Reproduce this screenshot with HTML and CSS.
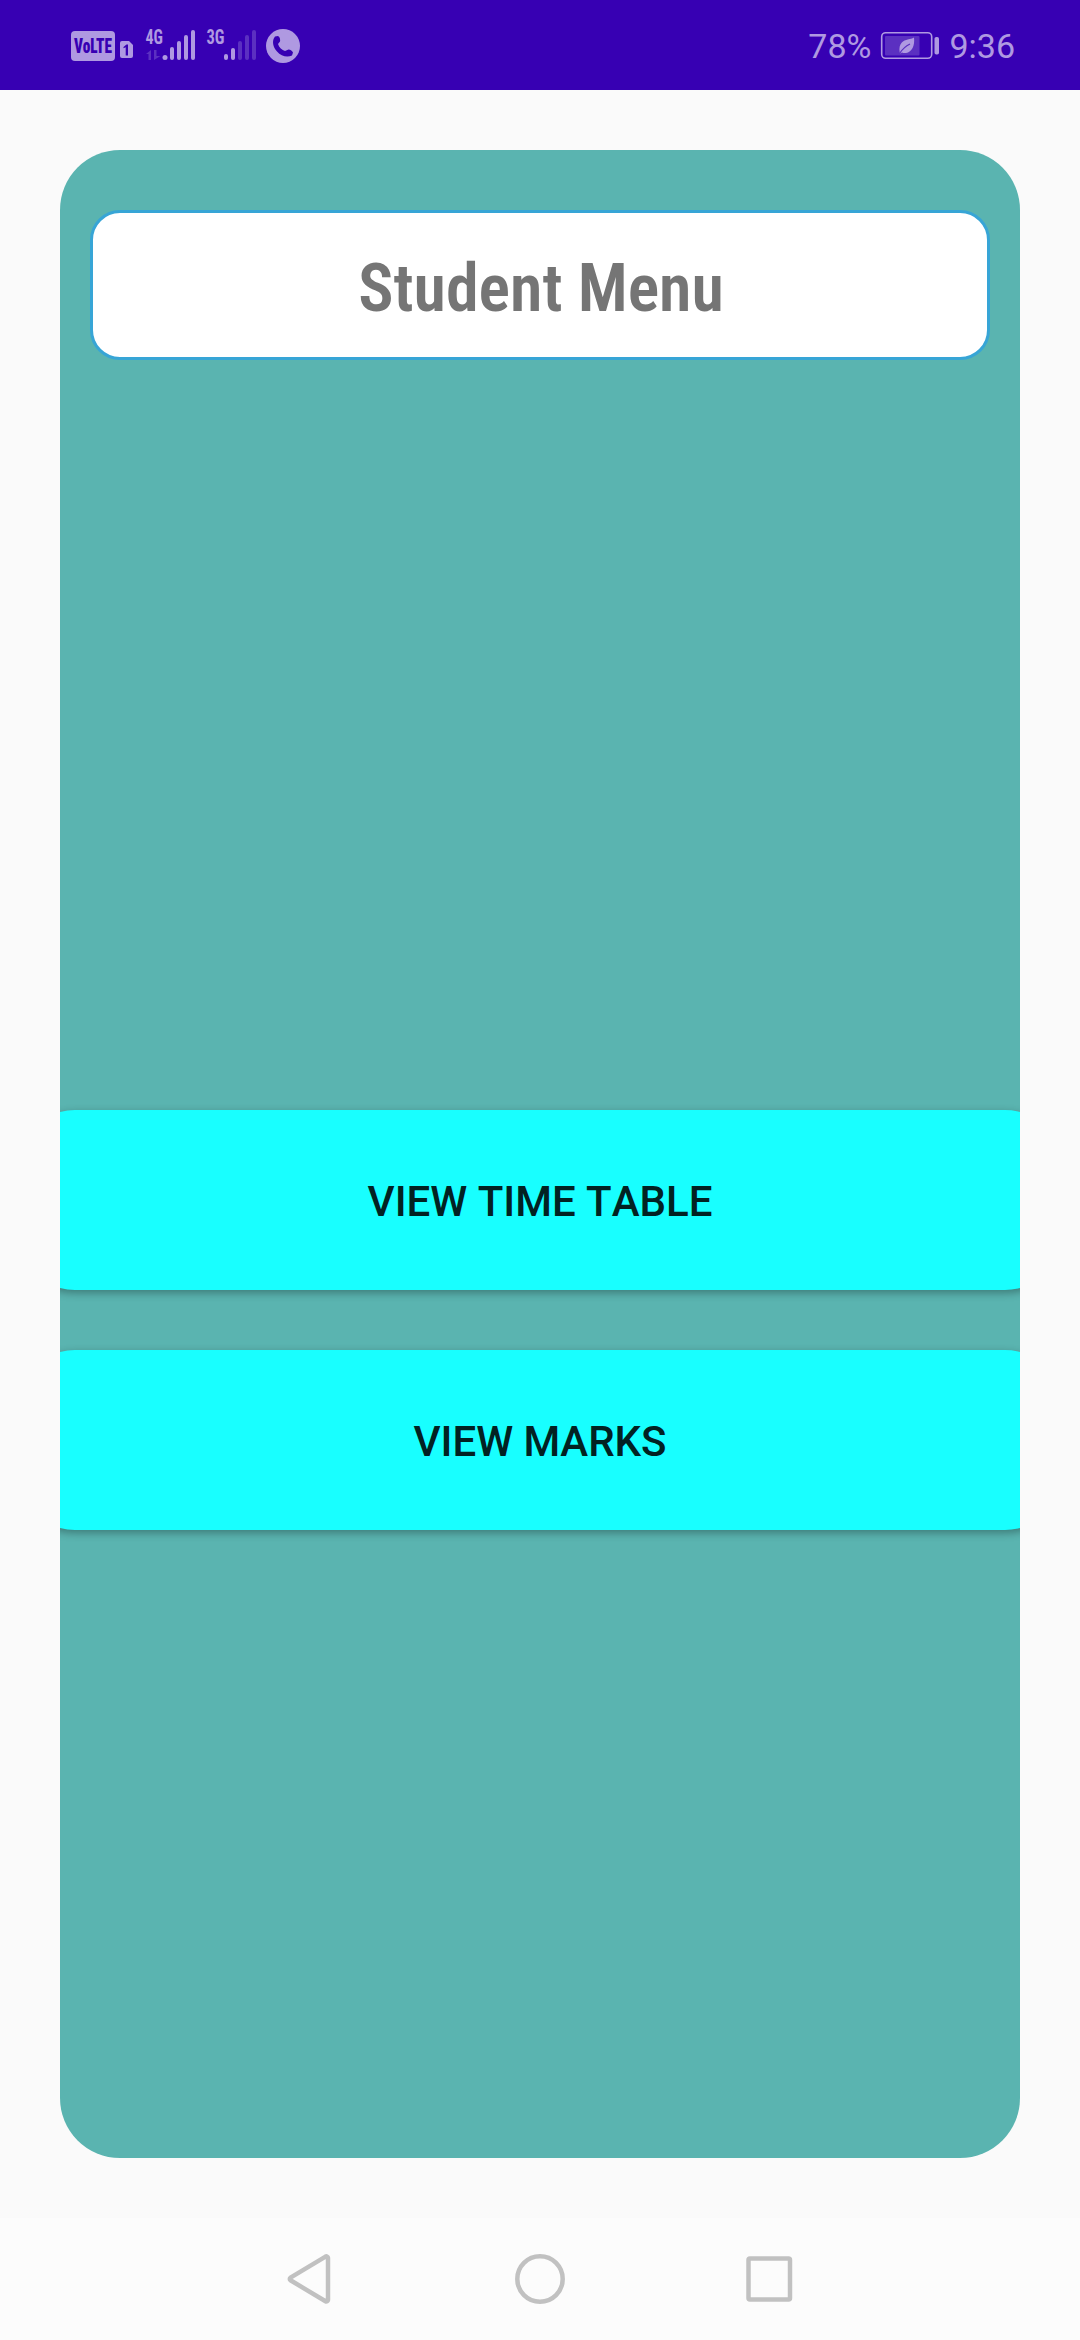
FILE: index.html
```html
<!DOCTYPE html>
<html lang="en">
<head>
<meta charset="utf-8">
<title>Student Menu</title>
<link rel="stylesheet" href="styles.css">
</head>
<body>
<header class="status-bar">
  <svg class="status-icons" width="232" height="40" viewBox="70 26 232 40">
    <rect x="71" y="31" width="44" height="30" rx="4"/>
    <text class="volte" x="74" y="53" textLength="38" lengthAdjust="spacingAndGlyphs">VoLTE</text>
    <path d="M122 41h7l4 4v11a2 2 0 0 1-2 2h-9a2 2 0 0 1-2-2V43a2 2 0 0 1 2-2z"/>
    <path class="cutout" d="M123.500 47l3-2.500h1.500v11h-2.300v-8.300l-2.200 1z"/>
    <text class="network" x="145.500" y="43.500" textLength="17.500" lengthAdjust="spacingAndGlyphs">4G</text>
    <path class="dim" d="M146 54l5-4v10h-2.500v-6zM154 50h2.500v6h4l-6.500 4z"/>
    <circle cx="165" cy="57.500" r="2.500"/>
    <rect x="170" y="47" width="4" height="13" rx="2"/>
    <rect x="177" y="41" width="4" height="19" rx="2"/>
    <rect x="184" y="35" width="4" height="25" rx="2"/>
    <rect x="191" y="30" width="4" height="30" rx="2"/>
    <text class="network" x="206.500" y="43.500" textLength="18" lengthAdjust="spacingAndGlyphs">3G</text>
    <rect x="224" y="54" width="4" height="6" rx="2"/>
    <rect x="231" y="48" width="4" height="12" rx="2"/>
    <g class="dim">
      <rect x="238" y="41" width="4" height="19" rx="2"/>
      <rect x="245" y="35" width="4" height="25" rx="2"/>
      <rect x="252" y="30" width="4" height="30" rx="2"/>
    </g>
    <circle cx="283" cy="46" r="17"/>
    <path class="cutout" d="M275 36.500l3-.5c2 1 2.500 4 2 5.500l-2 2.500c1 3.500 4 6 7 7l3.500-1.500c2 0 4 1.500 4.500 3l-1 3c-5 2.500-11 .5-15-4-4-4.500-5.500-10.500-2-15z"/>
  </svg>
  <div class="status-right">
    <span class="battery-level">78%</span>
    <svg width="60" height="30" viewBox="880 31 60 30">
      <rect class="outline" x="881.700" y="32.700" width="50" height="25.600" rx="4"/>
      <rect class="dim" x="885" y="36" width="34.500" height="19.500" rx="1"/>
      <path d="M914 37.500c1 8-2 14.500-8 15.500-1.500.3-3 0-4-.5l-1.500 1-.8-1c-1.500-9.500 4-12 8-13 2.500-.5 4.500-1 6.300-2z"/>
      <path class="vein" d="M900 53c3-5 6-7 10-9"/>
      <rect x="934.500" y="37" width="4.500" height="17.500" rx="1.800"/>
    </svg>
    <span class="clock">9:36</span>
  </div>
</header>
<main class="screen">
  <section class="card">
    <h1 class="title"><span class="title-text">Student Menu</span></h1>
    <div class="actions">
      <button class="action">VIEW TIME TABLE</button>
      <button class="action">VIEW MARKS</button>
    </div>
  </section>
</main>
<nav class="nav-bar">
  <svg width="506" height="52" viewBox="287 2253 506 52">
    <path d="M328 2258v42a1.700 1.700 0 0 1-2.500 1.300l-35-21a1.600 1.600 0 0 1 0-2.700l35-21a1.700 1.700 0 0 1 2.500 1.400z"/>
    <circle cx="540" cy="2279" r="22.700"/>
    <rect x="748.500" y="2258.500" width="41.500" height="41" rx="1.500"/>
  </svg>
</nav>
</body>
</html>
```

FILE: styles.css
```css
* { box-sizing: border-box; }

body {
  margin: 0;
  width: 1080px;
  height: 2340px;
  display: flex;
  flex-direction: column;
  overflow: hidden;
  background: #fafafa;
  font-family: Roboto, "Liberation Sans", sans-serif;
}

.status-bar {
  height: 90px;
  padding: 2px 65px 0 70px;
  display: flex;
  align-items: center;
  justify-content: space-between;
  background: #3700b3;
  color: #af99e1;
}

.status-bar svg { fill: #af99e1; }
.status-bar .cutout { fill: #3700b3; }
.status-bar .dim { fill: #5b30c1; }
.status-bar .outline { fill: none; stroke: #af99e1; stroke-width: 1.6; }
.status-bar .vein { fill: none; stroke: #5b30c1; stroke-width: 1.2; }

.volte {
  font: 900 20px "Roboto Condensed", Roboto, sans-serif;
  font-stretch: 75%;
  fill: #3700b3;
}

.network {
  font: 700 20px "Roboto Condensed", Roboto, sans-serif;
  font-stretch: 75%;
}

.status-right {
  display: flex;
  align-items: center;
  font-size: 34px;
  line-height: 40px;
}

.battery-level { margin-right: 9px; }
.clock { margin-left: 9px; }

.screen {
  flex: 1;
  display: flex;
  padding: 60px;
}

.card {
  flex: 1;
  display: flex;
  flex-direction: column;
  padding-top: 60px;
  border-radius: 60px;
  background: #5ab4b0;
  overflow: hidden;
}

.title {
  height: 150px;
  margin: 0 30px;
  padding: 6px 0 0 2px;
  display: flex;
  align-items: center;
  justify-content: center;
  border: 3px solid #37a5d6;
  border-radius: 30px;
  background: #fff;
  color: #757575;
  font: 600 66px "Roboto Condensed", Roboto, sans-serif;
  font-stretch: 75%;
}

.title-text { white-space: nowrap; }

.actions {
  margin: 750px -45px 0;
  display: flex;
  flex-direction: column;
  gap: 60px;
}

.action {
  height: 180px;
  padding: 2px 0 0;
  border: 0;
  border-radius: 60px;
  background: #18ffff;
  box-shadow: 0 3px 9px rgba(0, 0, 0, 0.32);
  color: #022222;
  font: 500 42px Roboto, sans-serif;
  font-kerning: none;
}

.nav-bar {
  height: 122px;
  display: flex;
  align-items: center;
  justify-content: center;
  background: #fcfcfc;
}

.nav-bar svg { fill: none; stroke: #c1c1c1; stroke-width: 4.5; }
```
